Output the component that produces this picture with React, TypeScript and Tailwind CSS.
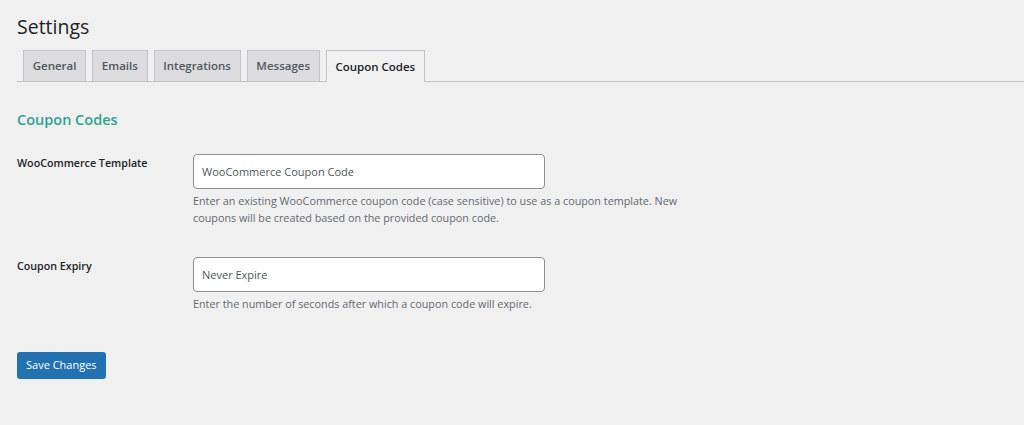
import React from "react";

const TABS = ["General", "Emails", "Integrations", "Messages", "Coupon Codes"];

const FONT = { fontFamily: '"Open Sans", "Noto Sans", sans-serif' };

function Field({
  label,
  value,
  help,
}: {
  label: string;
  value: string;
  help: React.ReactNode;
}) {
  return (
    <div className="flex">
      <div className="w-[176px] pt-[1px] text-[10.7px] font-semibold text-[#1d2327]">{label}</div>
      <div>
        <input
          readOnly
          value={value}
          className="w-[352px] h-[35px] rounded-[4px] border border-[#8c8f94] bg-white px-[8px] text-[11px] text-[#50575e] outline-none"
        />
        <p className="mt-[3px] w-[520px] text-[10.8px] leading-[17px] text-[#646970]">{help}</p>
      </div>
    </div>
  );
}

export default function App() {
  return (
    <div className="min-h-[425px] bg-[#f0f0f1] pl-[17px] pt-[12px]" style={FONT}>
      <h1 className="text-[19.5px] leading-[30px] text-[#1d2327]">Settings</h1>

      {/* tabs */}
      <div className="mt-[8px] flex border-b border-[#c3c4c7] pl-[6px] h-[32px]">
        {TABS.map((t, i) => {
          const active = i === TABS.length - 1;
          return (
            <div
              key={t}
              className={
                active
                  ? "mr-[6px] flex h-[32px] items-center border border-b-0 border-[#c3c4c7] bg-[#f0f0f1] px-[8.7px] text-[11.5px] font-semibold text-[#1d2327] -mb-px"
                  : "mr-[6px] flex h-[31px] items-center border border-b-0 border-[#c3c4c7] bg-[#dcdcde] px-[8.7px] text-[11.5px] font-semibold text-[#50575e]"
              }
            >
              {t}
            </div>
          );
        })}
      </div>

      <h2 className="mt-[27px] text-[14.5px] font-semibold text-[#2fa391]">Coupon Codes</h2>

      <div className="mt-[23px] flex flex-col gap-[31px]">
        <Field
          label="WooCommerce Template"
          value="WooCommerce Coupon Code"
          help="Enter an existing WooCommerce coupon code (case sensitive) to use as a coupon template. New coupons will be created based on the provided coupon code."
        />
        <Field
          label="Coupon Expiry"
          value="Never Expire"
          help="Enter the number of seconds after which a coupon code will expire."
        />
      </div>

      <button className="mt-[40px] h-[27px] rounded-[3px] bg-[#2271b1] px-[9px] text-[11px] text-white">
        Save Changes
      </button>
    </div>
  );
}
